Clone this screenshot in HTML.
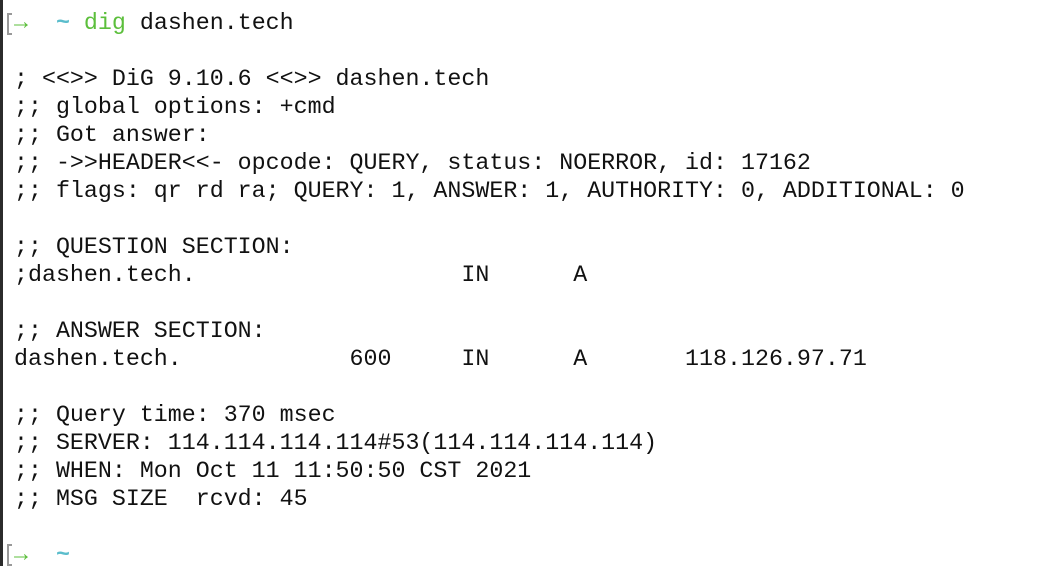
<!DOCTYPE html>
<html><head><style>
html,body{margin:0;padding:0;background:#fff;width:1044px;height:566px;overflow:hidden;}
.strip{position:absolute;left:0;top:0;width:3px;height:566px;background:#2b2b2b;}
pre{position:absolute;left:14px;top:9px;margin:0;font-family:"Liberation Mono",monospace;font-size:23.3px;line-height:28px;color:#111;}
.g{color:#5cbf3c;}.c{color:#5bbdcc;}
b{font-weight:bold;}
.br{position:absolute;left:7px;width:3px;height:18px;border:2px solid #999;border-right:none;}
</style></head><body>
<div class="strip"></div>
<div class="br" style="top:13px"></div>
<div class="br" style="top:544px"></div>
<pre><b class="g">→</b>  <b class="c">~</b> <span class="g">dig</span> dashen.tech

; &lt;&lt;&gt;&gt; DiG 9.10.6 &lt;&lt;&gt;&gt; dashen.tech
;; global options: +cmd
;; Got answer:
;; -&gt;&gt;HEADER&lt;&lt;- opcode: QUERY, status: NOERROR, id: 17162
;; flags: qr rd ra; QUERY: 1, ANSWER: 1, AUTHORITY: 0, ADDITIONAL: 0

;; QUESTION SECTION:
;dashen.tech.                   IN      A

;; ANSWER SECTION:
dashen.tech.            600     IN      A       118.126.97.71

;; Query time: 370 msec
;; SERVER: 114.114.114.114#53(114.114.114.114)
;; WHEN: Mon Oct 11 11:50:50 CST 2021
;; MSG SIZE  rcvd: 45

<b class="g">→</b>  <b class="c">~</b></pre>
</body></html>
